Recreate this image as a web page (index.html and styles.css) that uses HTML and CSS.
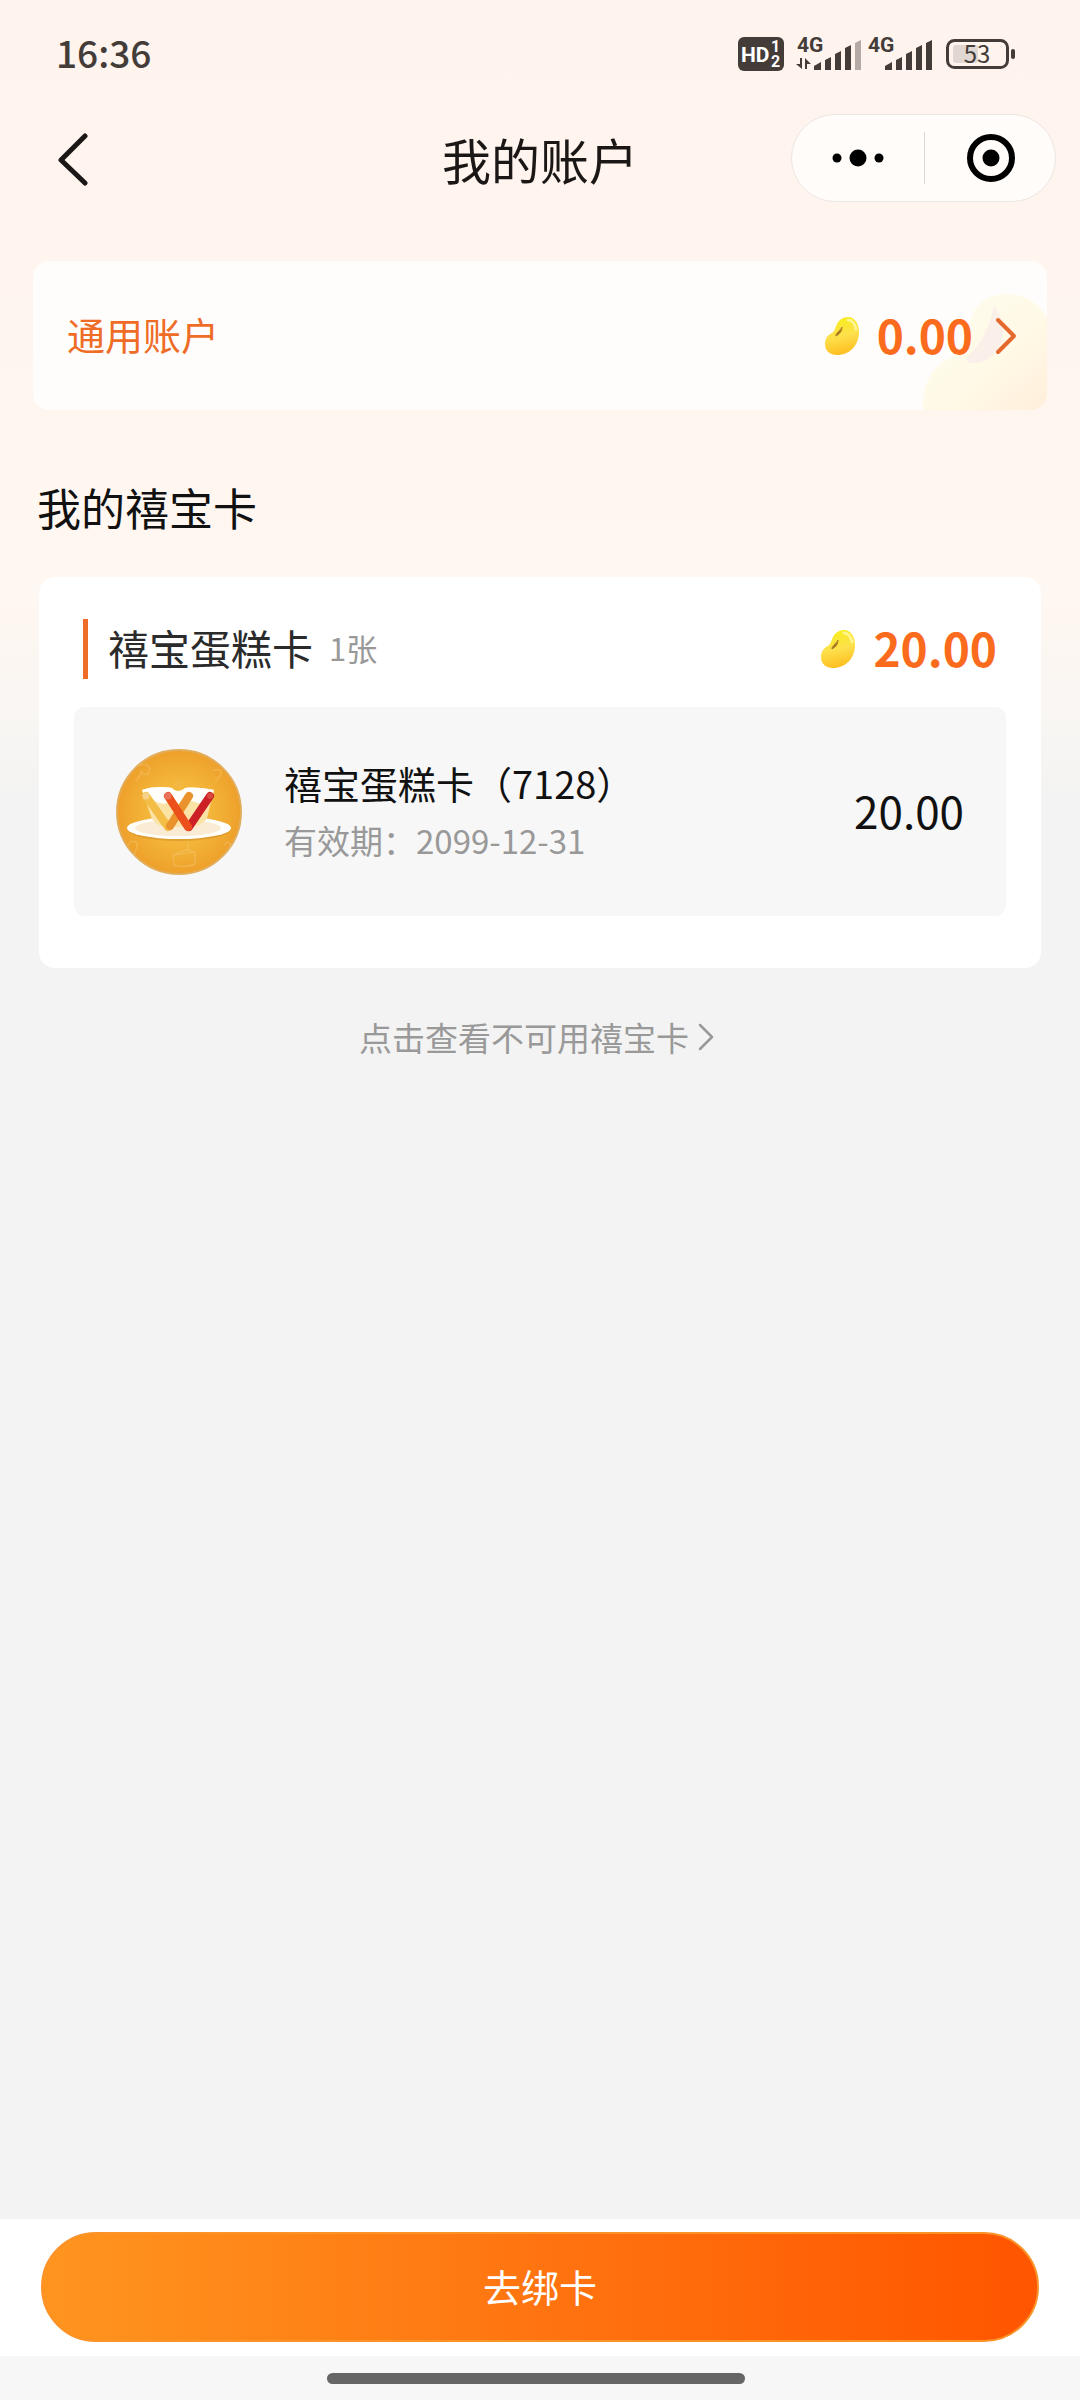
FILE: index.html
```html
<!DOCTYPE html>
<html lang="zh-CN">
<head>
<meta charset="utf-8">
<meta name="viewport" content="width=device-width, initial-scale=1">
<title>我的账户</title>
<link rel="stylesheet" href="styles.css">
</head>
<body>
<svg class="defs" width="0" height="0" aria-hidden="true">
  <defs>
    <linearGradient id="beanFill" x1="0.4" y1="0" x2="0.6" y2="1">
      <stop offset="0" stop-color="#f8ee1c"/>
      <stop offset="0.5" stop-color="#fde04c"/>
      <stop offset="1" stop-color="#fdbb1c"/>
    </linearGradient>
    <radialGradient id="discFill" cx="0.5" cy="0.5" r="0.5">
      <stop offset="0" stop-color="#f7c548"/>
      <stop offset="0.6" stop-color="#f2b237"/>
      <stop offset="1" stop-color="#eea02b"/>
    </radialGradient>
    <symbol id="bean" viewBox="0 0 36 40">
      <path d="M24 1C31 1 35 8 35 16C35 29 26 39 13 39C6 39 1 35 1 28C1 22 4 19 8 17C11 15 11 12 13 8C15 4 19 1 24 1Z" fill="url(#beanFill)"/>
      <path d="M24 4C28 4 31 8 32 13" fill="none" stroke="#fff8a8" stroke-width="3" stroke-linecap="round" opacity="0.8"/>
      <path d="M18 11C18 15 16 18 12 20C11 18 16 15 18 11Z" fill="#a8741c" stroke="#b5842a" stroke-width="1"/>
    </symbol>
  </defs>
</svg>

<header class="status">
  <time class="clock">16:36</time>
  <div class="status-icons">
    <svg width="46" height="34" viewBox="0 0 46 34" role="img" aria-label="HD">
      <rect width="46" height="34" rx="6" fill="#443c39"/>
      <text x="3" y="25" class="hd">HD</text>
      <text x="33" y="15" class="hd-num">1</text>
      <text x="33" y="30" class="hd-num">2</text>
    </svg>
    <svg class="signal-a" width="66" height="50" viewBox="0 -8 66 50" role="img" aria-label="4G">
      <text x="1" y="15" class="net">4G</text>
      <path d="M6 21V32L0 27H4V21ZM9 32V21L15 27H11V32Z" fill="#443c39"/>
      <g fill="#443c39">
        <path d="M18 33V29L25 25V33ZM29 33V23L35 20V33ZM39 33V17L45 14V33ZM49 33V11L55 8V33Z"/>
        <path d="M59 33V6L65 3V33Z" opacity="0.4"/>
      </g>
    </svg>
    <svg class="signal-b" width="66" height="50" viewBox="0 -8 66 50" role="img" aria-label="4G">
      <text x="1" y="15" class="net">4G</text>
      <path d="M18 33V29L25 25V33ZM29 33V23L35 20V33ZM39 33V17L45 14V33ZM49 33V11L55 8V33ZM59 33V6L65 3V33Z" fill="#443c39"/>
    </svg>
    <svg width="70" height="50" viewBox="0 -10 70 50" role="img" aria-label="53%">
      <rect x="7" y="6" width="25" height="18" rx="3" fill="#e0d7d2"/>
      <rect x="1.5" y="1.5" width="60" height="27" rx="7" fill="none" stroke="#443c39" stroke-width="3"/>
      <rect x="65" y="10" width="4" height="10" rx="2" fill="#443c39"/>
      <text x="31" y="24" class="charge">53</text>
    </svg>
  </div>
</header>

<nav class="navbar">
  <button class="back" type="button" aria-label="返回">
    <svg width="32" height="56" viewBox="0 0 32 56"><path d="M28 6L4 30L28 53" fill="none" stroke="#1a1716" stroke-width="5" stroke-linecap="round" stroke-linejoin="round"/></svg>
  </button>
  <h1 class="title">我的账户</h1>
  <div class="capsule">
    <button type="button" aria-label="更多">
      <svg width="52" height="18" viewBox="0 0 52 18"><circle cx="5" cy="9" r="4.5"/><circle cx="26" cy="9" r="8.5"/><circle cx="47" cy="9" r="4.5"/></svg>
    </button>
    <button type="button" aria-label="关闭">
      <svg width="50" height="50" viewBox="0 0 50 50"><circle cx="26" cy="25" r="21" fill="none" stroke="#000" stroke-width="6"/><circle cx="26" cy="25" r="8.5"/></svg>
    </button>
  </div>
</nav>

<main class="content">
  <a class="general" href="#general">
    <svg class="watermark" width="124" height="118" viewBox="0 0 124 118" aria-hidden="true">
      <defs>
        <linearGradient id="wm" x1="0" y1="0" x2="1" y2="1">
          <stop offset="0" stop-color="#fffdee"/>
          <stop offset="0.6" stop-color="#fff9e6"/>
          <stop offset="1" stop-color="#ffeedb"/>
        </linearGradient>
      </defs>
      <path d="M0 118C-1 88 12 70 35 63C50 55 42 35 52 17C66 -3 106 -6 124 26V118Z" fill="url(#wm)"/>
      <path d="M71 14C65 42 55 55 43 66C44 75 65 73 75 57C84 42 80 25 71 14Z" fill="#fbf0e9"/>
    </svg>
    <span class="general-name">通用账户</span>
    <span class="sum">
      <svg class="bean" width="36" height="40"><use href="#bean"/></svg>
      <span class="amount">0.00</span>
      <svg class="chevron" width="22" height="38" viewBox="0 0 22 38"><path d="M3 3L19 19L3 35" fill="none" stroke="#e5692c" stroke-width="4" stroke-linecap="round" stroke-linejoin="round"/></svg>
    </span>
  </a>

  <h2 class="section-title">我的禧宝卡</h2>

  <section class="group">
    <div class="group-head">
      <h3 class="group-name">禧宝蛋糕卡</h3>
      <span class="count">1张</span>
      <span class="sum">
        <svg class="bean" width="36" height="40"><use href="#bean"/></svg>
        <span class="amount">20.00</span>
      </span>
    </div>
    <article class="item">
      <svg width="126" height="126" viewBox="0 0 126 126" role="img" aria-label="禧宝蛋糕卡">
        <circle cx="63" cy="63" r="62" fill="url(#discFill)" stroke="#e2ae5c" stroke-width="2"/>
        <g fill="none" stroke="#f7cf7e" stroke-width="1.5" opacity="0.35">
          <path d="M20 32L27 22M23 17C28 13 36 17 33 23C31 27 25 26 24 22M97 22C104 18 108 23 103 28M99 33L105 26"/>
          <path d="M57 106L79 103V115C73 118 63 118 58 116ZM57 106L70 101L79 103M72 102V94M12 96C16 90 23 92 21 98L18 106M108 97C112 90 117 94 113 101"/>
        </g>
        <circle cx="62" cy="35" r="4" fill="#f3b744"/>
        <ellipse cx="63" cy="80" rx="52" ry="12" fill="#c88526" opacity="0.45"/>
        <ellipse cx="63" cy="79" rx="52" ry="11" fill="#fffefa"/>
        <ellipse cx="62" cy="79" rx="43" ry="8" fill="#f9ebd4"/>
        <path d="M26 41C38 37 48 38 56 39C59 43 65 43 69 39C78 38 88 39 98 41L91 69C87 76 78 78 73 78H51C44 78 39 74 36 70Z" fill="#fbe3a6"/>
        <path d="M26 41C38 37 48 38 56 39C59 43 65 43 69 39C78 38 88 39 98 41L94 54C85 58 80 51 73 52C63 59 58 49 51 54C43 57 38 49 30 52Z" fill="#fffefa"/>
        <g fill="none" stroke-width="8" stroke-linecap="round">
          <path d="M30 47L52 78" stroke="#f3bd46"/>
          <path d="M73 47L54 77" stroke="#ea922b"/>
          <path d="M94 47L73 78" stroke="#cc2026"/>
          <path d="M52 47L72 78" stroke="#eb4f1a"/>
        </g>
        <circle cx="30" cy="47" r="3.5" fill="#f6d18b"/>
        <circle cx="52" cy="47" r="3.5" fill="#e9735a"/>
        <circle cx="94" cy="47" r="3" fill="#d9483f"/>
      </svg>
      <div class="item-text">
        <h4 class="item-name">禧宝蛋糕卡（7128）</h4>
        <p class="item-date">有效期：2099-12-31</p>
      </div>
      <span class="item-amount">20.00</span>
    </article>
  </section>

  <a class="more" href="#unavailable">点击查看不可用禧宝卡
    <svg width="18" height="28" viewBox="0 0 18 28"><path d="M3 2L15 14L3 26" fill="none" stroke="#999" stroke-width="2.5" stroke-linecap="round" stroke-linejoin="round"/></svg>
  </a>
</main>

<footer class="footer">
  <div class="action"><button class="bind" type="button">去绑卡</button></div>
  <div class="gesture"><span class="pill"></span></div>
</footer>
</body>
</html>
```

FILE: styles.css
```css
* {
  box-sizing: border-box;
  margin: 0;
}

body {
  min-height: 100vh;
  display: flex;
  flex-direction: column;
  color: #111;
  font-family: "Noto Sans CJK SC", "Noto Sans", sans-serif;
  font-weight: 400;
  background: linear-gradient(#fff4ed 0, #fff5ef 300px, #fff7f1 600px, #f9f6f3 710px, #f3f3f3 810px) #f3f3f3;
}

button {
  border: 0;
  padding: 0;
  background: none;
  font: inherit;
  display: grid;
  place-items: center;
}

a {
  color: inherit;
  text-decoration: none;
}

svg {
  display: block;
  flex: none;
}

.defs {
  position: absolute;
}

/* Status bar */
.status {
  height: 108px;
  padding: 0 64px 0 56px;
  display: flex;
  align-items: center;
  justify-content: space-between;
}

.clock {
  padding-bottom: 4px;
  color: #443c39;
  font-size: 37px;
  font-weight: 500;
}

.status-icons {
  display: flex;
  align-items: center;
}

.signal-a {
  margin-left: 12px;
}

.signal-b {
  margin: 0 13px 0 5px;
}

.hd {
  fill: #fff;
  font: 700 21px Roboto, sans-serif;
}

.hd-num {
  fill: #fff;
  font: 700 16px Roboto, sans-serif;
}

.net {
  fill: #443c39;
  font: 700 21px Roboto, sans-serif;
}

.charge {
  fill: #443c39;
  font: 400 24px "Noto Sans CJK SC", sans-serif;
  text-anchor: middle;
}

/* Navigation bar */
.navbar {
  height: 100px;
  padding: 0 24px 0 56px;
  display: grid;
  grid-template-columns: 1fr auto 1fr;
  align-items: center;
}

.back {
  width: 32px;
  margin-left: 1px;
}

.title {
  margin-right: 32px;
  color: #1a1716;
  font-size: 49px;
  font-weight: 400;
}

.capsule {
  justify-self: end;
  width: 265px;
  height: 88px;
  display: grid;
  grid-template-columns: 1fr 1fr;
  align-items: center;
  border: 1px solid #ebe6e3;
  border-radius: 44px;
  background: #fffcfa;
}

.capsule button {
  height: 52px;
}

.capsule button + button {
  border-left: 1px solid #ddd8d5;
}

/* Account cards */
.content {
  flex: 1;
  padding-top: 53px;
  display: flex;
  flex-direction: column;
}

.general {
  position: relative;
  overflow: hidden;
  height: 149px;
  margin: 0 33px;
  padding: 0 30px 0 34px;
  display: flex;
  align-items: center;
  border-radius: 16px;
  background: #fffdfb;
}

.watermark {
  position: absolute;
  right: 0;
  bottom: 0;
}

.general-name {
  position: relative;
  padding-bottom: 4px;
  color: #ee6c26;
  font-size: 38px;
}

.sum {
  position: relative;
  margin-left: auto;
  display: flex;
  align-items: center;
}

.bean {
  margin-right: 17px;
}

.amount {
  padding-bottom: 4px;
  color: #fa6b1e;
  font-size: 46px;
  line-height: 56px;
  font-weight: 700;
}

.chevron {
  margin-left: 22px;
}

.section-title {
  margin: 62px 37px 35px;
  font-size: 44px;
  line-height: 70px;
  font-weight: 400;
}

.group {
  margin: 0 39px;
  padding: 42px 35px 52px;
  border-radius: 16px;
  background: #fff;
}

.group-head {
  height: 60px;
  margin: 0 9px 28px;
  padding: 0 0 0 20px;
  display: flex;
  align-items: center;
  gap: 16px;
  border-left: 5px solid #ee6c26;
}

.group-name {
  padding-bottom: 4px;
  color: #2b2b2b;
  font-size: 41px;
  font-weight: 400;
}

.count {
  padding-bottom: 4px;
  color: #999;
  font-size: 31px;
}

.item {
  height: 209px;
  padding: 0 42px;
  display: flex;
  align-items: center;
  border-radius: 10px;
  background: #f7f7f7;
}

.item-text {
  margin-left: 42px;
  padding-bottom: 4px;
}

.item-name {
  font-size: 38px;
  line-height: 60px;
  font-weight: 400;
}

.item-date {
  color: #999;
  font-size: 33px;
  line-height: 54px;
}

.item-amount {
  margin-left: auto;
  padding-bottom: 4px;
  font-size: 44px;
}

.more {
  align-self: center;
  margin: 43px 6px 0 0;
  display: flex;
  align-items: center;
  gap: 8px;
  color: #999;
  font-size: 33px;
  line-height: 52px;
}

/* Bottom action */
.action {
  height: 137px;
  padding: 0 41px 2px;
  display: grid;
  align-items: center;
  background: #fff;
}

.bind {
  height: 110px;
  padding-bottom: 3px;
  border: 2px solid #fb9329;
  border-radius: 55px;
  color: #fff;
  font-size: 38px;
  font-weight: 400;
  background: linear-gradient(90deg, #ff951f, #ff7410 50%, #ff5500) border-box;
}

.gesture {
  height: 44px;
  padding-right: 8px;
  display: grid;
  place-items: center;
  background: #f7f7f7;
}

.pill {
  width: 418px;
  height: 11px;
  border-radius: 6px;
  background: #666;
}
```
